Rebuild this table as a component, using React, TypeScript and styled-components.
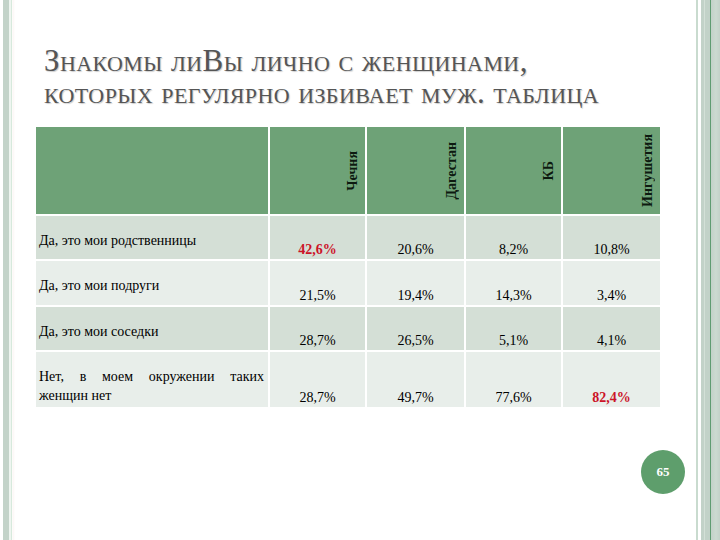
import React from "react";
import styled, { createGlobalStyle } from "styled-components";

const GlobalStyle = createGlobalStyle`
  html, body { margin: 0; padding: 0; background: #ffffff; }
  body { font-family: "Liberation Serif", "Times New Roman", serif; }
`;

const Slide = styled.div`
  display: flex;
  width: 720px;
  height: 540px;
  background: #ffffff;
  overflow: hidden;
`;

const LeftRail = styled.div`
  width: 15px;
  flex: none;
  background: linear-gradient(
    to right,
    #ffffff 0px, #ffffff 3px,
    #c3d3c9 3px, #c3d3c9 9px,
    #eef5f0 9px, #eef5f0 11px,
    #d6e9dc 11px, #d6e9dc 12px,
    #ffffff 12px, #fbf6f4 13px, #ffffff 15px
  );
`;

const RightRail = styled.div`
  width: 32px;
  flex: none;
  background: linear-gradient(
    to right,
    #ffffff 0px, #ffffff 8px,
    #c9dbcf 8px, #c9dbcf 10px,
    #ffffff 10px, #ffffff 13px,
    #c2d2c8 13px, #c2d2c8 16px,
    #d3e0d7 16px, #d3e0d7 17px,
    #c2d2c8 17px, #c2d2c8 22px,
    #5f9c72 22px, #5f9c72 23px,
    #c3d2c9 23px, #ccdad1 28px, #c3d2c9 32px
  );
`;

const Main = styled.div`
  flex: 1;
  display: flex;
  flex-direction: column;
  padding-top: 45px;
`;

const Title = styled.h1`
  margin: 0 0 18px 29px;
  font-family: "Liberation Serif", "Times New Roman", serif;
  font-weight: normal;
  font-size: 31px;
  line-height: 32px;
  letter-spacing: 0.4px;
  font-variant: small-caps;
  color: #555555;
  text-shadow: 1px 1px 1px rgba(0, 0, 0, 0.2);
`;

const TitleLine = styled.div`
  white-space: nowrap;
`;

const Table = styled.div`
  margin-left: 21px;
  display: grid;
  grid-template-columns: 232px 95px 97px 95px 97px;
  grid-template-rows: 87px 43px 44px 43px 55px;
  gap: 2px;
  width: 624px;
  font-family: "Liberation Serif", "Times New Roman", serif;
  color: #000000;
`;

const HeaderCell = styled.div`
  background: #6ea277;
  display: flex;
  align-items: center;
  justify-content: flex-end;
  padding-right: 4px;
`;

const HeaderText = styled.span`
  writing-mode: vertical-rl;
  transform: rotate(180deg);
  font-weight: bold;
  font-size: 14px;
  line-height: 16px;
  color: #0d1a10;
  white-space: nowrap;
`;

const LabelCell = styled.div<{ $tone: "dark" | "light" }>`
  background: ${(p) => (p.$tone === "dark" ? "#d4dfd6" : "#e8eeea")};
  padding: 15px 4px 0 3px;
  font-size: 14px;
  line-height: 19px;
  text-align: justify;
  text-align-last: left;
`;

const ValueCell = styled.div<{ $tone: "dark" | "light"; $hot?: boolean }>`
  background: ${(p) => (p.$tone === "dark" ? "#d4dfd6" : "#e8eeea")};
  display: flex;
  align-items: flex-end;
  justify-content: center;
  padding-bottom: 1px;
  font-size: 14px;
  line-height: 16px;
  font-weight: ${(p) => (p.$hot ? "bold" : "normal")};
  color: ${(p) => (p.$hot ? "#cc1428" : "#000000")};
`;

const Footer = styled.div`
  display: flex;
  justify-content: flex-end;
  padding-right: 3px;
  margin-top: 43px;
`;

const PageBadge = styled.div`
  width: 44px;
  height: 44px;
  border-radius: 50%;
  background: #5e9e6c;
  color: #ffffff;
  display: flex;
  align-items: center;
  justify-content: center;
  font-family: "Liberation Serif", "Times New Roman", serif;
  font-weight: bold;
  font-size: 13px;
`;

const regions = ["Чечня", "Дагестан", "КБ", "Ингушетия"];

type Row = { label: string; values: string[]; hot?: number };

const rows: Row[] = [
  { label: "Да, это мои родственницы", values: ["42,6%", "20,6%", "8,2%", "10,8%"], hot: 0 },
  { label: "Да, это мои подруги", values: ["21,5%", "19,4%", "14,3%", "3,4%"] },
  { label: "Да, это мои соседки", values: ["28,7%", "26,5%", "5,1%", "4,1%"] },
  { label: "Нет, в моем окружении таких женщин нет", values: ["28,7%", "49,7%", "77,6%", "82,4%"], hot: 3 },
];

export default function App() {
  return (
    <>
      <GlobalStyle />
      <Slide>
        <LeftRail />
        <Main>
          <Title>
            <TitleLine>Знакомы лиВы лично с женщинами,</TitleLine>
            <TitleLine>которых регулярно избивает муж. таблица</TitleLine>
          </Title>
          <Table>
            <HeaderCell />
            {regions.map((r) => (
              <HeaderCell key={r}>
                <HeaderText>{r}</HeaderText>
              </HeaderCell>
            ))}
            {rows.map((row, i) => {
              const tone = i % 2 === 0 ? "dark" : "light";
              return (
                <React.Fragment key={row.label}>
                  <LabelCell $tone={tone}>{row.label}</LabelCell>
                  {row.values.map((v, j) => (
                    <ValueCell key={j} $tone={tone} $hot={row.hot === j}>
                      {v}
                    </ValueCell>
                  ))}
                </React.Fragment>
              );
            })}
          </Table>
          <Footer>
            <PageBadge>65</PageBadge>
          </Footer>
        </Main>
        <RightRail />
      </Slide>
    </>
  );
}
